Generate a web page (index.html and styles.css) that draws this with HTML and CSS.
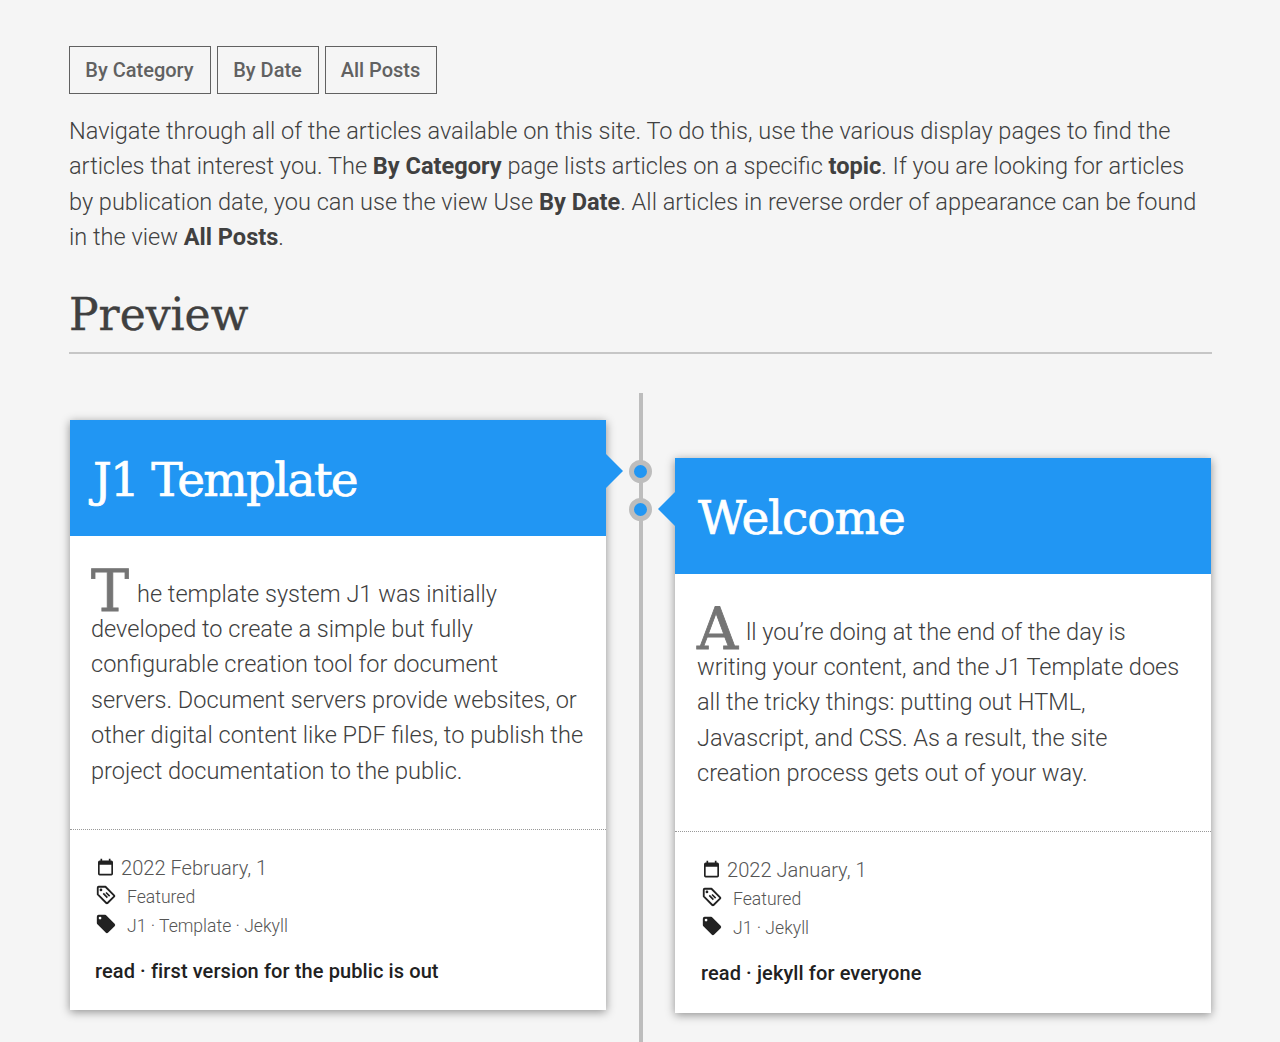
FILE: index.html
```html
<!DOCTYPE html>
<html lang="en">
<head>
<meta charset="utf-8">
<title>Posts</title>
<link rel="stylesheet" href="styles.css">
</head>
<body>
<svg class="sprite" aria-hidden="true">
  <symbol id="calendar" viewBox="0 0 24 24"><path fill-rule="evenodd" d="M6 1h2v2h8V1h2v2h1a2 2 0 0 1 2 2v14a2 2 0 0 1-2 2H5a2 2 0 0 1-2-2V5a2 2 0 0 1 2-2h1zM5 8v11h14V8z"/></symbol>
  <symbol id="tag-text" viewBox="0 0 24 24"><path fill="none" stroke="currentColor" stroke-width="2" stroke-linejoin="round" d="M3 4a1 1 0 0 1 1-1h7.4L21 12.600a1 1 0 0 1 0 .8L13.400 21a1 1 0 0 1-.8 0L3 11.400z"/><circle cx="6.500" cy="6.500" r="1.500"/><path fill="none" stroke="currentColor" stroke-width="1.800" d="M12 9.300l4 4M9 10.300l4.500 4.500"/></symbol>
  <symbol id="tag" viewBox="0 0 24 24"><path fill-rule="evenodd" d="M4 2h7a2 2 0 0 1 1.400.6l9 9a2 2 0 0 1 0 2.800l-7 7a2 2 0 0 1-2.800 0l-9-9A2 2 0 0 1 2 11V4a2 2 0 0 1 2-2zm1.500 2a1.500 1.500 0 1 0 0 3 1.500 1.500 0 0 0 0-3z"/></symbol>
</svg>
<main class="page">
  <nav class="filters">
    <a class="filter filter-category">By Category</a>
    <a class="filter filter-date">By Date</a>
    <a class="filter filter-all">All Posts</a>
  </nav>
  <p class="intro">Navigate through all of the articles available on this site. To do this, use the various display pages to find the<br>articles that interest you. The <b>By Category</b> page lists articles on a specific <b>topic</b>. If you are looking for articles<br>by publication date, you can use the view Use <b>By Date</b>. All articles in reverse order of appearance can be found<br>in the view <b>All Posts</b>.</p>
  <h2 class="section-title"><span>Preview</span></h2>
  <section class="timeline">
    <article class="card card-left">
      <h3 class="card-title"><span>J1 Template</span></h3>
      <p class="card-text"><span class="dropcap">T</span>he template system J1 was initially<br>developed to create a simple but fully<br>configurable creation tool for document<br>servers. Document servers provide websites, or<br>other digital content like PDF files, to publish the<br>project documentation to the public.</p>
      <footer class="card-footer">
        <div class="meta meta-date"><svg class="icon"><use href="#calendar"/></svg><span>2022 February, 1</span></div>
        <div class="meta"><svg class="icon"><use href="#tag-text"/></svg><span>Featured</span></div>
        <div class="meta"><svg class="icon"><use href="#tag"/></svg><span>J1 · Template · Jekyll</span></div>
        <a class="read">read · first version for the public is out</a>
      </footer>
    </article>
    <article class="card card-right">
      <h3 class="card-title"><span>Welcome</span></h3>
      <p class="card-text"><span class="dropcap">A</span>ll you’re doing at the end of the day is<br>writing your content, and the J1 Template does<br>all the tricky things: putting out HTML,<br>Javascript, and CSS. As a result, the site<br>creation process gets out of your way.</p>
      <footer class="card-footer">
        <div class="meta meta-date"><svg class="icon"><use href="#calendar"/></svg><span>2022 January, 1</span></div>
        <div class="meta"><svg class="icon"><use href="#tag-text"/></svg><span>Featured</span></div>
        <div class="meta"><svg class="icon"><use href="#tag"/></svg><span>J1 · Jekyll</span></div>
        <a class="read">read · jekyll for everyone</a>
      </footer>
    </article>
  </section>
</main>
</body>
</html>
```
FILE: styles.css
```css
*, *::before, *::after { box-sizing: border-box; }
body {
  margin: 0;
  height: 1042px;
  overflow: hidden;
  background: #f5f5f5;
  color: #404040;
  font-family: Roboto, "Liberation Sans", sans-serif;
}
.sprite { position: absolute; width: 0; height: 0; }
.page {
  display: flex;
  flex-direction: column;
  height: 1042px;
  padding: 46px 68px 0 69px;
}
.filters { display: flex; gap: 6px; }
.filter {
  display: flex;
  align-items: center;
  justify-content: center;
  height: 48px;
  padding-right: 1px;
  border: 1px solid #616161;
  color: #616161;
  font-size: 20px;
  font-weight: 500;
  white-space: nowrap;
}
.filter-category { width: 142px; }
.filter-date { width: 102px; }
.filter-all { width: 112px; }
.intro, .card-text {
  margin: 0;
  font-size: 23.55px;
  font-weight: 300;
  line-height: 35.4px;
  white-space: nowrap;
}
.intro { margin-top: 20px; }
.intro b { font-weight: 700; }
.section-title, .card-title, .dropcap {
  font-family: "Roboto Slab", "DejaVu Serif", serif;
  font-weight: 400;
}
.section-title {
  margin: 23px 0 0;
  height: 75px;
  border-bottom: 2px solid #c6c6c6;
  font-size: 44px;
  line-height: 72px;
  -webkit-text-stroke: .4px currentColor;
}
.timeline {
  flex: 1;
  position: relative;
  display: grid;
  grid-template-columns: 536px 536px;
  justify-content: space-between;
  align-items: start;
  margin: 39px 0 0;
  padding: 0 1px;
}
.timeline::before {
  content: "";
  position: absolute;
  left: 570px;
  top: 0;
  bottom: 0;
  width: 4px;
  background: #bdbdbd;
}
.card {
  position: relative;
  background: #fff;
  box-shadow: 0 2px 9px rgba(0, 0, 0, .42);
}
.card-left { margin-top: 27px; height: 590px; }
.card-right { margin-top: 65px; height: 555px; }
.card::before {
  content: "";
  position: absolute;
  top: 34px;
  border: 17px solid transparent;
}
.card-left::before { left: 100%; border-left-color: #2196f3; border-right: 0; }
.card-right::before { right: 100%; border-right-color: #2196f3; border-left: 0; }
.card::after {
  content: "";
  position: absolute;
  top: 40px;
  width: 23px;
  height: 23px;
  border: 5px solid #bdbdbd;
  border-radius: 50%;
  background: #2196f3;
}
.card-left::after { left: 559px; }
.card-right::after { right: 559px; }
.card-title {
  margin: 0;
  height: 116px;
  padding-left: 23px;
  background: #2196f3;
  color: #fff;
  font-size: 47px;
  line-height: 119px;
  letter-spacing: -1.8px;
  -webkit-text-stroke: .7px currentColor;
}
.card-right .card-title { letter-spacing: -1.1px; }
.card-text { height: 293px; padding: 40px 0 0 21px; }
.card-right .card-text { height: 257px; padding-left: 22px; }
.dropcap {
  display: inline-block;
  width: 46px;
  color: #757575;
  font-size: 57px;
  line-height: 30px;
  vertical-align: -9px;
  -webkit-text-stroke: .8px currentColor;
}
.card-right .dropcap { width: 49px; }
.card-footer {
  display: flex;
  flex-direction: column;
  padding: 24px 26px 0 25px;
  border-top: 1px dotted #999;
}
.card-right .card-footer { padding-left: 26px; }
.meta {
  display: flex;
  align-items: center;
  gap: 10px;
  height: 29px;
  font-size: 17.6px;
  font-weight: 300;
  color: #555;
}
.meta-date { gap: 5px; font-size: 20.1px; }
.icon { width: 22px; height: 22px; color: #212121; fill: #212121; position: relative; top: -2px; }
.meta-date .icon { width: 21px; height: 20px; top: 0; }
.read {
  margin-top: 16px;
  color: #212121;
  font-size: 20px;
  font-weight: 500;
  letter-spacing: .1px;
  line-height: 28px;
  white-space: nowrap;
}
```
